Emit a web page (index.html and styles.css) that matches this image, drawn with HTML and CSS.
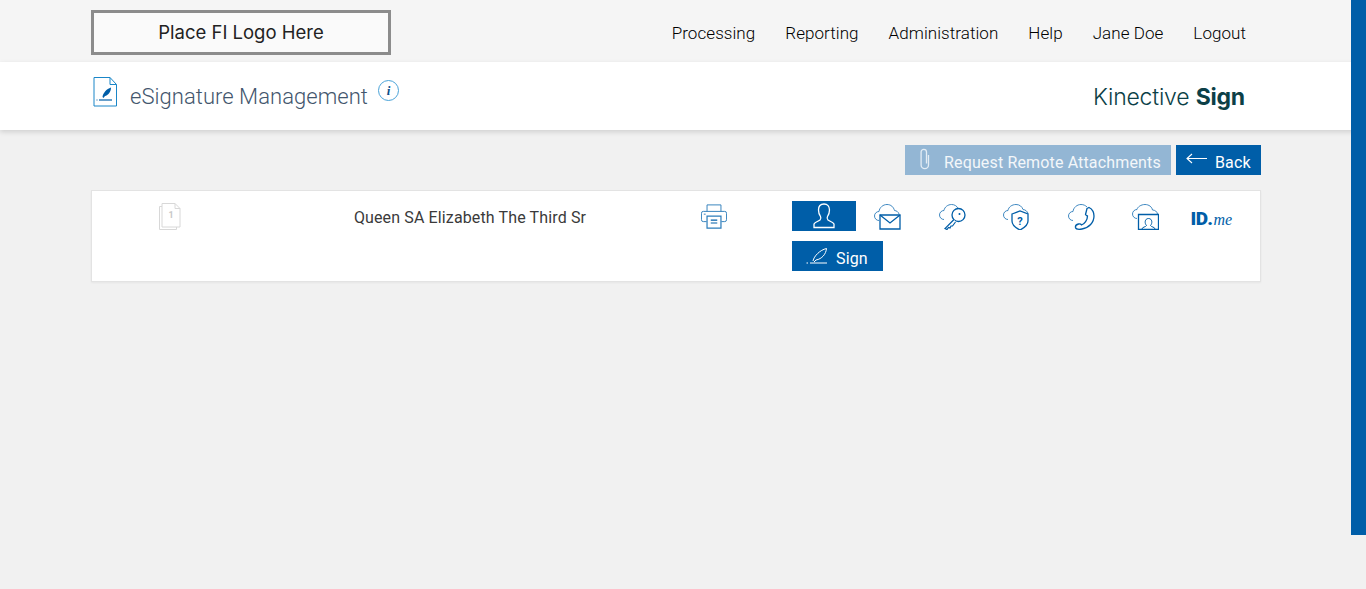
FILE: index.html
```html
<!DOCTYPE html>
<html lang="en">
<head>
<meta charset="utf-8">
<title>eSignature Management</title>
<link rel="stylesheet" href="styles.css">
</head>
<body>
<header class="topbar">
  <div class="wrap topbar-in">
    <div class="logo">Place FI Logo Here</div>
    <nav class="nav">
      <a>Processing</a><a>Reporting</a><a>Administration</a><a>Help</a><a>Jane Doe</a><a>Logout</a>
    </nav>
  </div>
</header>
<section class="titlebar">
  <div class="wrap titlebar-in">
    <div class="title-left">
      <svg class="doc-icon" width="25" height="30" viewBox="0 0 25 30" fill="none">
        <path d="M1 .5h16l6.500 7v21.500H1z" fill="#fff" stroke="#1a86c8" stroke-width="1"/>
        <path d="M17 .5v7h6.500" stroke="#1a86c8" stroke-width="1"/>
        <path d="M9.500 20c.5-4 4-8 8.500-9.500 0 4.500-3 8-6 8.500l-1.500 2z" fill="#005ea8"/>
        <path d="M6 23h13" stroke="#005ea8" stroke-width="1.200"/>
        <path d="M3.500 23h1" stroke="#005ea8" stroke-width="1.200"/>
      </svg>
      <h1 class="title">eSignature Management</h1>
      <span class="info">i</span>
    </div>
    <div class="brand">Kinective <b>Sign</b></div>
  </div>
</section>
<main class="wrap">
  <div class="actions">
    <button class="btn btn-off">
      <svg width="12" height="22" viewBox="0 0 12 22" fill="none" stroke="#e4edf5" stroke-width="1.300"><path d="M9.500 7v10a3.700 3.700 0 0 1-7.400 0V4a2.700 2.700 0 0 1 5.400 0v11.500"/></svg>
      <span>Request Remote Attachments</span>
    </button>
    <button class="btn btn-back">
      <svg width="21" height="11" viewBox="0 0 21 11" fill="none" stroke="#fff" stroke-width="1.100"><path d="M21 5.500H1M6 1L1 5.500 6 10"/></svg>
      <span>Back</span>
    </button>
  </div>
  <div class="card">
    <div class="pages">
      <svg width="22" height="27" viewBox="0 0 22 27" fill="none" stroke="#d8d8d8" stroke-width="1">
        <path d="M3 3.500H.5v23h17V24"/>
        <path d="M3 .5h13l5 5v18.500H3z" fill="#fff"/>
        <path d="M16 .5v5h5"/>
        <text x="12" y="15" class="page-num">1</text>
      </svg>
    </div>
    <div class="name">Queen SA Elizabeth The Third Sr</div>
    <div class="print">
      <svg width="26" height="27" viewBox="0 0 28 27" fill="none" stroke="#2b7cba" stroke-width="1">
        <path d="M6.500 8V1h15v7"/>
        <path d="M6 19H2.500a2 2 0 0 1-2-2V10a2 2 0 0 1 2-2h23a2 2 0 0 1 2 2v7a2 2 0 0 1-2 2H22"/>
        <path d="M6.500 13h15v13h-15z" stroke-width="1.300"/>
        <path d="M10.500 17.500h7M10.500 20.500h7" stroke="#005ea8" stroke-width="1.300"/>
        <path d="M3 11h2" />
      </svg>
    </div>
    <div class="tools">
      <button class="tool-on">
        <svg width="22" height="26" viewBox="0 0 22 26" fill="none" stroke="#fff" stroke-width="1.300"><path d="M11 1c-3.500 0-5.500 2.500-5.500 6 0 3 1 5 2 6.500.6 1 .5 2.500-.5 3.500-1.500 1.200-5 2-6 4v3.500h20V21c-1-2-4.500-2.800-6-4-1-1-1.100-2.500-.5-3.500 1-1.500 2-3.500 2-6.500 0-3.500-2-6-5.500-6z"/></svg>
      </button>
      <span class="tool">
        <svg width="27" height="26" viewBox="0 0 27 26" fill="none" stroke="#2b7cba"><path d="M5 16.500C2.500 16.500.5 14.500.5 12S2.500 7.500 5 7.500C5.500 3.500 9 .5 13 .5s6.500 2.500 7.500 6c2 .2 4 1.500 4.500 3.500" stroke-width=".9"/><path d="M6 11h20v14H6z" fill="#fff" stroke="#005ea8" stroke-width="1.300"/><path d="M6 11l10 8 10-8" stroke="#005ea8" stroke-width="1.300"/></svg>
      </span>
      <span class="tool">
        <svg width="27" height="26" viewBox="0 0 27 26" fill="none" stroke="#2b7cba"><path d="M5 15.500C2.500 15.500.5 13.500.5 11S2.500 6.500 5 6.500C5.500 3 9 .5 12.500.5c3 0 5.500 1.500 6.500 4" stroke-width=".9"/><circle cx="19.500" cy="11" r="6.500" fill="#fff" stroke="#005ea8" stroke-width="1.300"/><circle cx="20.500" cy="10" r="1" fill="#005ea8" stroke="none"/><path d="M15 15.500L6 24.500l2 1 1.500-2 1.500 0.500 1-2 1.500 0 3-4" fill="#fff" stroke="#005ea8" stroke-width="1.200"/></svg>
      </span>
      <span class="tool">
        <svg width="27" height="26" viewBox="0 0 27 26" fill="none" stroke="#2b7cba"><path d="M5 15.500C2.500 15.500.5 13.500.5 11S2.500 6.500 5 6.500C5.500 3 9 .5 13 .5c3.500 0 6 2 7 5 2.500.200 4.500 2 5 4" stroke-width=".9"/><path d="M9 10l8-3 8 3v7c0 4-4 7-8 9-4-2-8-5-8-9z" fill="#fff" stroke="#005ea8" stroke-width="1.300"/><text x="17" y="20.500" class="qmark">?</text></svg>
      </span>
      <span class="tool">
        <svg width="27" height="26" viewBox="0 0 27 26" fill="none" stroke="#2b7cba"><path d="M5 16.500C2.500 16.500.5 14.500.5 12S2.500 7.500 5 7.500C5.500 3.500 9 .5 13 .5c2.500 0 4.500 1 6 2.500" stroke-width=".9"/><path d="M19 4.500l2-1c3 1.500 5 4.500 5 8.500 0 6.500-5 12-12 13-3 .5-6 .5-6.500-1.500-.3-1.500 1-3 3-3.500 1.500-.3 2.500 0 3 1 3-1 6-5 6-9-.5-.5-1.500-.5-2-1.500z" fill="#fff" stroke="#005ea8" stroke-width="1.300"/></svg>
      </span>
      <span class="tool">
        <svg width="27" height="26" viewBox="0 0 27 26" fill="none" stroke="#2b7cba"><path d="M5 14.500C2.500 14.500.5 12.500.5 10S2.500 5.500 5 5.500C5.500 3 9 .5 13 .5c4 0 7 2.500 7.500 5.500 2.500 0 4.500 1.500 5 4" stroke-width=".9"/><path d="M6.500 10.500h20v15h-20z" fill="#fff" stroke="#005ea8" stroke-width="1.300"/><path d="M10 25c0-2 4-2 4.500-3.500-2-2-2-7 2-7s4 5 2 7C19 23 23 23 23 25" stroke="#005ea8"/></svg>
      </span>
      <span class="idme"><b>ID</b><b>.</b><i>me</i></span>
      <button class="tool-sign">
        <svg width="22" height="16" viewBox="0 0 22 16" fill="none" stroke="#fff"><path d="M7 13C8 8 14 2 20.500.5 20 6 16 11 10 12l-2 2" stroke-width="1"/><path d="M4 15h17" stroke-width="1"/><path d="M.5 15h1.500" stroke-width="1"/></svg>
        <span>Sign</span>
      </button>
    </div>
  </div>
</main>
<div class="scroll-thumb"></div>
</body>
</html>
```
FILE: styles.css
```css
* { box-sizing: border-box; }
html, body { margin: 0; padding: 0; height: 100%; }
body {
  background: #f1f1f1;
  font-family: Roboto, "Liberation Sans", sans-serif;
  overflow: hidden;
}
.wrap { width: 1170px; margin-left: 91px; }
.topbar { height: 62px; background: #f5f5f5; }
.topbar-in { display: flex; justify-content: space-between; align-items: flex-start; padding-top: 10px; }
.logo {
  width: 300px; height: 45px;
  border: 3px solid #8c8c8c;
  background: #fafafa;
  color: #222;
  font-family: Inter, sans-serif;
  font-size: 18.500px;
  font-weight: 400;
  line-height: 38px;
  text-align: center;
}
.nav { display: flex; gap: 30px; padding: 13px 15px 0 0; font-size: 17px; font-weight: 300; letter-spacing: .06px; color: #000; line-height: 20px; }
.titlebar { height: 68px; background: #fff; box-shadow: 0 2px 5px rgba(0,0,0,.14); }
.titlebar-in { display: flex; justify-content: space-between; }
.title-left { display: flex; align-items: flex-start; padding: 15px 0 0 2px; }
.doc-icon { display: block; }
.title { margin: 6px 0 0 12px; font-size: 22px; font-weight: 300; letter-spacing: .05px; color: #43566d; line-height: 28px; }
.info {
  width: 21px; height: 21px; margin: 3px 0 0 10px;
  border: 1px solid #4aa3d8; border-radius: 50%;
  color: #0b4f8a;
  font: italic 700 13px/19px "Liberation Serif", serif;
  text-align: center;
}
.brand { padding: 20px 16px 0 0; font-family: Inter, sans-serif; font-size: 23px; font-weight: 300; color: #0c3f47; line-height: 30px; letter-spacing: -.2px; }
.brand b { font-weight: 700; }
.actions { display: flex; justify-content: flex-end; gap: 5px; padding-top: 15px; }
.btn {
  display: flex; align-items: center; height: 30px; padding: 0;
  border: 0; color: #fff; font-family: Roboto, sans-serif; font-size: 16px; font-weight: 400; letter-spacing: .15px;
}
.btn span { line-height: 30px; padding-top: 5px; }
.btn-off { width: 266px; background: #93b6d4; color: #f3f7fa; padding-left: 14px; }
.btn-off svg { margin-right: 13px; margin-top: -3px; }
.btn-back { width: 85px; background: #005ea8; padding-left: 10px; }
.btn-back svg { margin-right: 8px; margin-top: -3px; }
.card {
  display: flex; align-items: flex-start;
  height: 92px; margin-top: 15px;
  background: #fff; border: 1px solid #e3e3e3;
  box-shadow: 0 1px 2px rgba(0,0,0,.05);
}
.pages { width: 156px; padding: 12px 0 0 67px; }
.pages svg, .print svg, .tool svg, .tool-on svg, .tool-sign svg { display: block; }
.page-num { font: 700 9px Roboto, sans-serif; fill: #c8c8c8; stroke: none; text-anchor: middle; }
.qmark { font: 700 11px Roboto, sans-serif; fill: #005ea8; stroke: none; text-anchor: middle; }
.name { width: 444px; padding-top: 17px; font-size: 16px; letter-spacing: .13px; color: #3a3a3a; text-align: center; line-height: 20px; }
.print { width: 100px; padding: 12px 0 0 9px; }
.tools { display: flex; flex-wrap: wrap; width: 460px; padding-top: 10px; row-gap: 10px; }
.tool-on { display: flex; justify-content: center; align-items: center; width: 64px; height: 30px; padding: 0; border: 0; background: #005ea8; }
.tool { display: flex; align-items: center; width: 64.500px; height: 30px; padding: 0 0 0 18px; margin-top: 1px; margin-bottom: -1px; }
.idme { display: flex; align-items: baseline; height: 30px; width: 60px; padding-left: 12px; color: #005ea8; font-family: Roboto, sans-serif; font-size: 19px; line-height: 36px; }
.idme b { font-weight: 900; letter-spacing: -.6px; }
.idme i { margin-left: 1px; font: italic 400 16px/36px "Liberation Serif", serif; }
.tool-sign {
  display: flex; align-items: center; width: 91px; height: 30px; margin-right: 300px;
  padding: 0 0 0 14px; border: 0; background: #005ea8; color: #fff;
  font-family: Roboto, sans-serif; font-size: 16px; font-weight: 400; letter-spacing: .15px;
}
.tool-sign span { margin-left: 8px; padding-top: 4px; }
.scroll-thumb { position: absolute; top: 0; right: 0; width: 15px; height: 535px; background: #005ea8; }
```
